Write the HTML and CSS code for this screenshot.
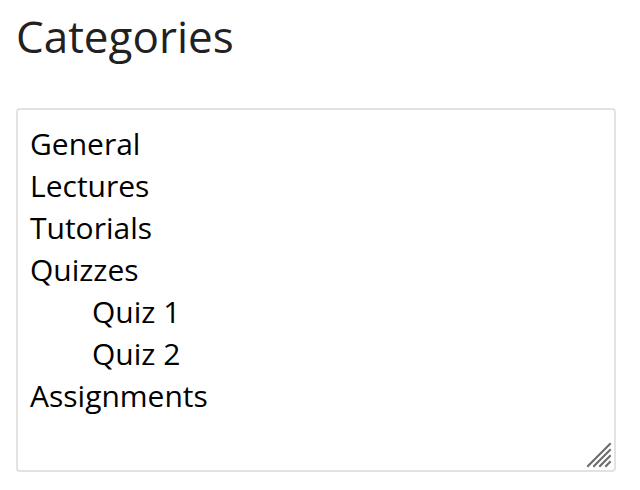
FILE: index.html
```html
<!DOCTYPE html>
<html>
<head>
<meta charset="utf-8">
<link rel="stylesheet" href="styles.css">
</head>
<body>
<h1 class="title">Categories</h1>
<div class="box">
  <div class="item">General</div>
  <div class="item">Lectures</div>
  <div class="item">Tutorials</div>
  <div class="item">Quizzes</div>
  <div class="item sub">Quiz 1</div>
  <div class="item sub">Quiz 2</div>
  <div class="item">Assignments</div>
  <svg class="grip" width="28" height="28" viewBox="0 0 28 28">
    <g stroke="#6b6b6b" stroke-width="2" stroke-linecap="square">
      <line x1="3" y1="25" x2="25" y2="3"/>
      <line x1="9" y1="25" x2="25" y2="9"/>
      <line x1="15" y1="25" x2="25" y2="15"/>
      <line x1="21" y1="25" x2="25" y2="21"/>
    </g>
  </svg>
</div>
</body>
</html>
```
FILE: styles.css
```css
html, body {
  margin: 0;
  padding: 0;
  background: #fff;
}
body {
  font-family: "Open Sans", "DejaVu Sans", sans-serif;
  color: #222;
  padding: 0 16px;
}
.title {
  margin: 0;
  padding-top: 8px;
  font-size: 44px;
  font-weight: 400;
  line-height: 56px;
  color: #212121;
}
.box {
  position: relative;
  margin-top: 44px;
  width: 600px;
  height: 364px;
  box-sizing: border-box;
  border: 2px solid #e2e2e2;
  border-radius: 4px;
  padding: 13px 12px;
  font-size: 30px;
  line-height: 42px;
  color: #000;
}
.item.sub {
  padding-left: 62px;
}
.grip {
  position: absolute;
  right: 1px;
  bottom: 1px;
}
```
